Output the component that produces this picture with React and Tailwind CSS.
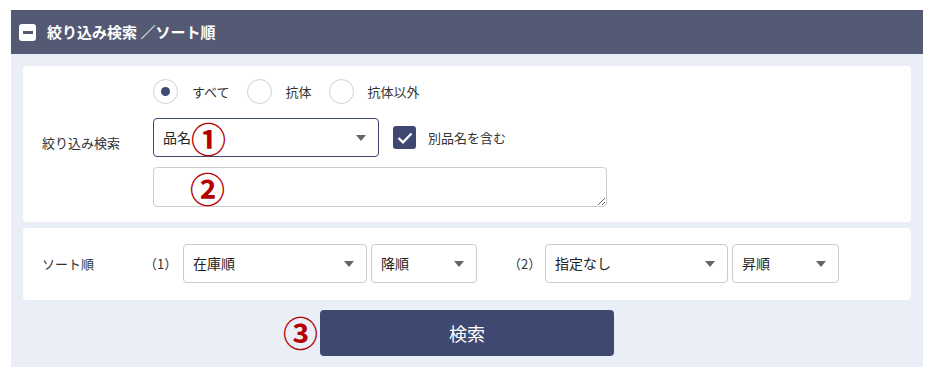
import React from 'react';

const font = { fontFamily: '"Noto Sans CJK JP", "Noto Sans", sans-serif' };

const Caret = () => (
  <svg width="10" height="6" viewBox="0 0 10 6" className="shrink-0">
    <path d="M0 0 L10 0 L5 6 Z" fill="#666" />
  </svg>
);

const Select = ({ value, className = '', active }) => (
  <div
    className={`h-[39px] flex items-center justify-between pl-[9px] pr-[12px] bg-white border ${
      active ? 'border-[#3e4870]' : 'border-[#cccccc]'
    } rounded-[4px] text-[14px] text-[#222] ${className}`}
  >
    <span>{value}</span>
    <Caret />
  </div>
);

const Radio = ({ label, checked }) => (
  <label className="flex items-center gap-[14px] text-[13px] text-[#333]">
    <span className="w-[25px] h-[25px] rounded-full border border-[#d0d0d0] bg-white flex items-center justify-center">
      {checked && <span className="w-[9px] h-[9px] rounded-full bg-[#3e4870]" />}
    </span>
    {label}
  </label>
);

const Mark = ({ children, className = '' }) => (
  <span
    className={`absolute text-[35px] leading-none font-bold text-[#b40000] ${className}`}
  >
    {children}
  </span>
);

export default function App() {
  return (
    <div className="bg-white pt-[10px] pb-[12px] pl-[11px] w-[931px]" style={font}>
      <div className="w-[912px]">
        <div className="h-[44px] bg-[#545a74] flex items-center pl-[8px] gap-[11px]">
          <span className="w-[17px] h-[17px] bg-white rounded-[3px] flex items-center justify-center">
            <span className="w-[10px] h-[3px] bg-[#545a74]" />
          </span>
          <span className="text-white text-[15px] font-bold">絞り込み検索 ／ソート順</span>
        </div>

        <div className="bg-[#eaeff7] px-[12px] pt-[12px] pb-[11px] flex flex-col">
          <div className="bg-white rounded-[4px] flex pl-[19px] pt-[13px] pb-[15px]">
            <div className="w-[111px] flex items-center text-[13px] text-[#333]">絞り込み検索</div>
            <div className="flex flex-col">
              <div className="flex items-center gap-[17px] h-[25px]">
                <Radio label="すべて" checked />
                <Radio label="抗体" />
                <Radio label="抗体以外" />
              </div>
              <div className="flex items-center mt-[14px]">
                <div className="relative">
                  <Select value="品名" className="w-[226px]" active />
                  <Mark className="left-[38px] top-[2px]">①</Mark>
                </div>
                <span className="ml-[14px] w-[23px] h-[23px] rounded-[3px] bg-[#3e4870] flex items-center justify-center">
                  <svg width="16" height="12" viewBox="0 0 16 12">
                    <path d="M1.5 6 L6 10.3 L14.5 1.5" fill="none" stroke="white" strokeWidth="2.4" />
                  </svg>
                </span>
                <span className="ml-[12px] text-[13px] text-[#333]">別品名を含む</span>
              </div>
              <div className="relative mt-[10px]">
                <textarea
                  className="block w-[454px] h-[40px] border border-[#cccccc] rounded-[4px] bg-white"
                  readOnly
                />
                <Mark className="left-[37px] top-[3px]">②</Mark>
              </div>
            </div>
          </div>

          <div className="bg-white rounded-[4px] flex items-center pl-[19px] pt-[16px] pb-[17px] mt-[6px] text-[13px] text-[#333]">
            <div className="w-[102px]">ソート順</div>
            <div className="w-[39px]">（1）</div>
            <Select value="在庫順" className="w-[184px]" />
            <Select value="降順" className="w-[106px] ml-[4px]" />
            <div className="w-[68px] pl-[31px]">（2）</div>
            <Select value="指定なし" className="w-[183px]" />
            <Select value="昇順" className="w-[107px] ml-[4px]" />
          </div>

          <div className="flex justify-center mt-[10px]">
            <div className="relative">
              <Mark className="-left-[37px] top-[4px]">③</Mark>
              <button className="w-[294px] h-[46px] bg-[#3e4870] rounded-[4px] text-white text-[18px]">
                検索
              </button>
            </div>
          </div>
        </div>
      </div>
    </div>
  );
}
